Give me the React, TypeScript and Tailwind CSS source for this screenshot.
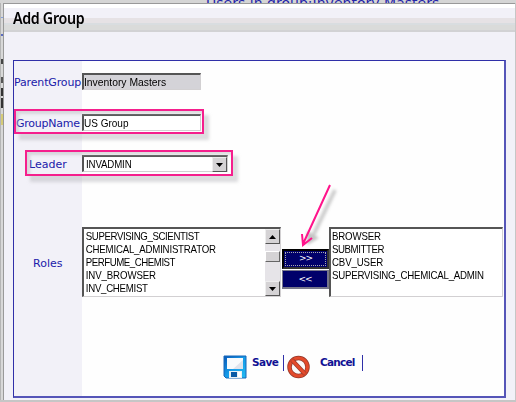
import React from "react";

const roles = ["SUPERVISING_SCIENTIST", "CHEMICAL_ADMINISTRATOR", "PERFUME_CHEMIST", "INV_BROWSER", "INV_CHEMIST"];
const roleSpacing = ["tracking-[-0.45px]", "tracking-[-0.24px]", "tracking-[-0.53px]", "tracking-[-0.14px]", "tracking-[-0.32px]"];
const granted = ["BROWSER", "SUBMITTER", "CBV_USER", "SUPERVISING_CHEMICAL_ADMIN"];
const grantedSpacing = ["tracking-[-0.2px]", "tracking-[-0.5px]", "tracking-[-0.15px]", "tracking-[-0.27px]"];

function Label({ children, className = "" }: { children: React.ReactNode; className?: string }) {
  return (
    <div className={`w-[68px] shrink-0 whitespace-nowrap font-['DejaVu_Sans',sans-serif] text-[11px] leading-[14px] text-[#2020aa] ${className}`}>
      {children}
    </div>
  );
}

function Arrow({ down = false }: { down?: boolean }) {
  return (
    <div className="flex h-[15px] w-[15px] shrink-0 items-center justify-center border border-t-[#eee] border-r-[#555] border-b-[#555] border-l-[#eee] bg-[#d5d3d5]">
      <svg width="7" height="4" viewBox="0 0 7 4">
        <path d={down ? "M0 0h7L3.5 4z" : "M0 4h7L3.5 0z"} fill="#000" />
      </svg>
    </div>
  );
}

function Bevel({ children, className }: { children?: React.ReactNode; className: string }) {
  return (
    <div className={`shrink-0 border-t-2 border-r border-b border-l-2 border-t-[#555] border-r-[#d2d0d2] border-b-[#d2d0d2] border-l-[#555] font-['Liberation_Sans',Arial,sans-serif] text-[11px] whitespace-nowrap text-black ${className}`}>
      {children}
    </div>
  );
}

export default function App() {
  return (
    <div className="relative flex h-[402px] w-[516px] flex-col overflow-hidden bg-[#c6c6c6]">
      <div className="flex h-[3px] shrink-0 items-start overflow-hidden bg-[#d5d5d5] pl-[206px] font-['DejaVu_Sans',sans-serif] text-[14px] leading-[14px] tracking-[0.02px] whitespace-nowrap text-[#2525aa]">
        <span className="-translate-y-[4px]">Users in group:Inventory Masters</span>
      </div>
      <div className="flex h-[397px] shrink-0">
        <div className="flex w-[3px] shrink-0 flex-col border-l border-[#b5b5b5] bg-[#d8d8d8]">
          <div className="mt-[14px] h-px bg-[#86a0dc]" />
          <div className="mt-[16px] h-[2px] bg-[#5b6bc0]" />
          <div className="mt-[23px] h-[5px] bg-[#444]" />
          <div className="mt-[13px] h-[6px] bg-[#555]" />
          <div className="mt-[5px] h-[8px] bg-[#333]" />
          <div className="mt-[2px] h-[10px] bg-[#333]" />
          <div className="mt-[6px] h-[11px] bg-[#d5cb78]" />
        </div>
        <main className="flex w-[512px] shrink-0 flex-col border-t border-l border-[#999] bg-[#f2f1f8]">
          <header className="h-[28px] shrink-0 bg-[linear-gradient(#fff_0_4px,#f2f1f8_4px_14px,#e6e2e5_14px_19px,#d9dde0_19px_21px,#dadbda_21px_26px,#d2d2d4_26px)] pl-[9px]">
            <h1 className="origin-left scale-x-[.92] pt-[4px] font-['Noto_Sans',sans-serif] text-[15.5px] leading-[20px] font-semibold tracking-[-0.35px] text-black">Add Group</h1>
          </header>
          <section className="mt-[28px] ml-[9px] h-[338px] w-[493px] shrink-0 border-t border-r-2 border-b-2 border-l border-t-[#3030a8] border-r-[#5555b8] border-b-[#5555b8] border-l-[#3030a8] bg-[linear-gradient(90deg,#f2f1f8_68px,#fefefe_68px)]">
            <div className="flex h-[53px] pt-[12px]">
              <Label className="pt-[3px] tracking-[-0.15px]">ParentGroup</Label>
              <Bevel className="h-[17px] w-[119px] bg-[#d4d3d8] leading-[15px]"><span className="inline-block origin-left scale-x-[.94]">Inventory Masters</span></Bevel>
            </div>
            <div className="flex h-[41px]">
              <Label className="pt-[3px] pl-[2px] tracking-[-0.25px]">GroupName</Label>
              <Bevel className="h-[17px] w-[119px] bg-white leading-[15px]"><span className="inline-block origin-left scale-x-[.91]">US Group</span></Bevel>
            </div>
            <div className="flex h-[72px]">
              <Label className="pt-[3px] pl-[15px]">Leader</Label>
              <Bevel className="flex h-[17px] w-[146px] justify-between bg-white pl-[2px] leading-[14px] tracking-[-0.16px]"><span className="origin-left scale-x-[.88]">INVADMIN</span><Arrow down /></Bevel>
            </div>
            <div className="flex h-[128px]">
              <Label className="pt-[30px] pl-[19px]">Roles</Label>
              <Bevel className="flex h-[70px] w-[199px] bg-white">
                <ul className="w-[181px] shrink-0 origin-left scale-x-[.88] pt-px pl-[2px] leading-[13px]">
                  {roles.map((role, i) => <li key={role} className={roleSpacing[i]}>{role}</li>)}
                </ul>
                <div className="flex h-[67px] w-[15px] flex-col bg-[#e6e4e8]">
                  <Arrow />
                  <div className="mt-[7px] mb-auto h-[11px] border border-t-white border-r-[#666] border-b-[#666] border-l-white bg-[#d5d3d5]" />
                  <Arrow down />
                </div>
              </Bevel>
              <div className="flex w-[48px] shrink-0 flex-col pt-[22px] pl-px font-['DejaVu_Sans',sans-serif] text-[9px] leading-[15px] tracking-[-1px] text-white">
                <button className="h-[20px] border-2 border-t-black border-r-[#333] border-b-[#333] border-l-black bg-[#00006a] p-px"><span className="block h-[14px] border border-dotted border-[#aaa] leading-[11px]">&gt;&gt;</span></button>
                <button className="mt-px h-[19px] border-t border-r-2 border-b-2 border-l border-[#77778b] bg-[#00006a]">&lt;&lt;</button>
              </div>
              <Bevel className="h-[70px] w-[174px] bg-white pl-px">
                <ul className="origin-left scale-x-[.88] pt-px leading-[13px]">
                  {granted.map((role, i) => <li key={role} className={grantedSpacing[i]}>{role}</li>)}
                </ul>
              </Bevel>
            </div>
            <div className="flex pl-[209px] font-['DejaVu_Sans',sans-serif] text-[10.5px] leading-[15px] font-bold text-[#111194]">
              <svg width="24" height="24" viewBox="0 0 24 24" className="shrink-0">
                <defs>
                  <linearGradient id="disk" x1="0" y1="0" x2="1" y2="1"><stop stopColor="#0757b8" /><stop offset=".5" stopColor="#159be9" /><stop offset="1" stopColor="#22bdf2" /></linearGradient>
                </defs>
                <path d="M1 1H23V23H3L1 21Z" fill="url(#disk)" stroke="#1767b8" />
                <path d="M4 3H20V14H4Z" fill="#f7fafc" /><path d="M10 14L20 5V14Z" fill="#dfe3ec" />
                <path d="M6 16H19V23H6Z" fill="#e8f1f4" /><path d="M8 17H14V22H8Z" fill="#075aa5" /><path d="M15 17H18V22H15Z" fill="#fff" />
              </svg>
              <span className="ml-[5px] w-[31px] tracking-[-0.6px]">Save</span>
              <span className="h-[16px] w-px bg-[#3030a8]" />
              <svg width="23" height="24" viewBox="0 0 23 24" className="ml-[3px] shrink-0">
                <circle cx="11.5" cy="12" r="9" fill="#fafafa" stroke="#963a2c" strokeWidth="4.5" />
                <circle cx="11.5" cy="12" r="9" fill="none" stroke="#e34a2b" strokeWidth="3" />
                <path d="M5 5L18 19" stroke="#963a2c" strokeWidth="4.2" /><path d="M5 5L18 19" stroke="#e34a2b" strokeWidth="3" />
              </svg>
              <span className="ml-[10px] w-[42px] tracking-[-0.75px]">Cancel</span>
              <span className="h-[16px] w-px bg-[#3030a8]" />
            </div>
          </section>
        </main>
      </div>
      <div className="absolute top-[109px] left-[14px] h-[25px] w-[190px] border-2 border-[#f51f8d] shadow-[5px_6px_3px_#bbbbc080,inset_3px_3px_3px_#bbbbc080]" />
      <div className="absolute top-[150px] left-[25px] h-[26px] w-[208px] border-2 border-[#f51f8d] shadow-[5px_6px_3px_#bbbbc080,inset_3px_3px_3px_#bbbbc080]" />
      <svg className="absolute top-[180px] left-[294px]" width="48" height="70" viewBox="0 0 48 70">
        <g className="blur-[1.5px]" opacity=".5"><path d="M41 10L17 60" stroke="#999" strokeWidth="4" /><path d="M13 51V65L25 58Z" fill="#888" /></g>
        <path d="M36 5L9 64M8 54L9 65L18 58" fill="none" stroke="#ff148b" strokeWidth="2" />
      </svg>
    </div>
  );
}
